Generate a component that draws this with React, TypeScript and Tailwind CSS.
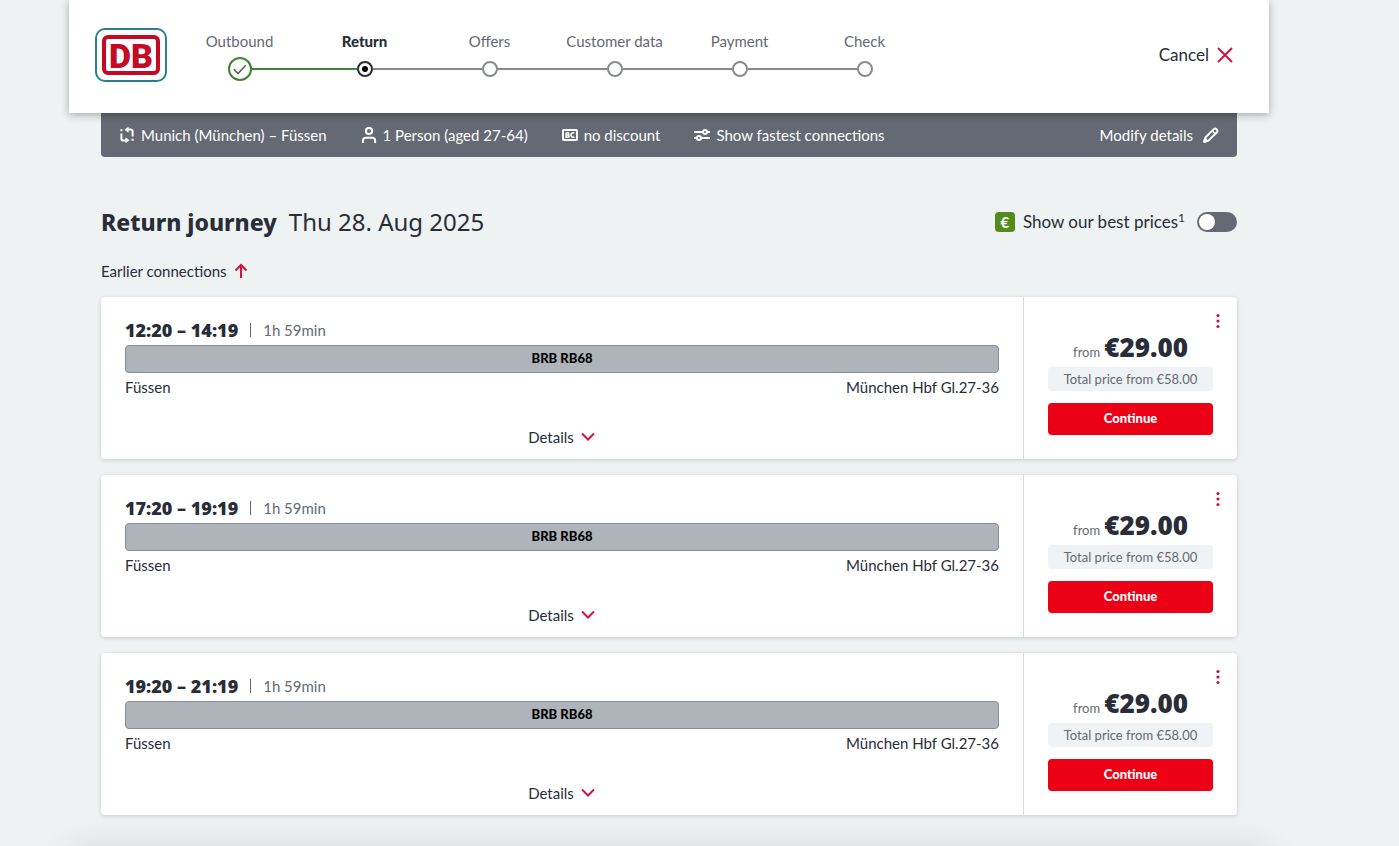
import React, { useState } from 'react';

interface Connection {
  departure: string;
  arrival: string;
  duration: string;
  train: string;
  from: string;
  to: string;
  price: string;
  total: string;
}

const steps = ['Outbound', 'Return', 'Offers', 'Customer data', 'Payment', 'Check'];
const currentStep = 1;

const connections: Connection[] = [
  { departure: '12:20', arrival: '14:19', duration: '1h 59min', train: 'BRB RB68', from: 'Füssen', to: 'München Hbf Gl.27-36', price: '€29.00', total: '€58.00' },
  { departure: '17:20', arrival: '19:19', duration: '1h 59min', train: 'BRB RB68', from: 'Füssen', to: 'München Hbf Gl.27-36', price: '€29.00', total: '€58.00' },
  { departure: '19:20', arrival: '21:19', duration: '1h 59min', train: 'BRB RB68', from: 'Füssen', to: 'München Hbf Gl.27-36', price: '€29.00', total: '€58.00' },
];

function RouteIcon() {
  return (
    <svg className="w-4 h-4" viewBox="0 0 16 16" fill="none" stroke="currentColor" strokeWidth="2">
      <path d="M7 13.500H4.200a1.800 1.800 0 0 1-1.800-1.800V6.500M9 2.500h2.800a1.800 1.800 0 0 1 1.800 1.800V9.500" />
      <path d="M6.500 10.200v6l4-3zM9.500-.3v6l-4-3z" fill="currentColor" stroke="none" />
      <path d="M1.400 3.300h2M12.600 12.800h2" />
    </svg>
  );
}

function PersonIcon() {
  return (
    <svg className="w-4 h-4" viewBox="0 0 16 16" fill="none" stroke="currentColor" strokeWidth="2">
      <circle cx="8" cy="4" r="3.100" />
      <path d="M1.900 16v-2.200a3 3 0 0 1 3-3h6.200a3 3 0 0 1 3 3V16" />
    </svg>
  );
}

function CardIcon() {
  return (
    <svg className="w-4 h-4" viewBox="0 0 16 16" fill="none" stroke="currentColor">
      <rect x="1" y="3" width="14" height="10" rx="0.800" strokeWidth="2" />
      <path d="M4.200 5.700v4.600h1.700a1.100 1.100 0 0 0 0-2.300H4.500M5.700 8a1.100 1.100 0 0 0 0-2.300H4.200M12.400 6.200a2.200 2.200 0 1 0 0 3.600" strokeWidth="1.600" />
    </svg>
  );
}

function SlidersIcon() {
  return (
    <svg className="w-4 h-4" viewBox="0 0 16 16" fill="none" stroke="currentColor" strokeWidth="2">
      <path d="M0 5h9M13 5h3M0 11h3M7 11h9" />
      <circle cx="11" cy="5" r="2" />
      <circle cx="5" cy="11" r="2" />
    </svg>
  );
}

function PencilIcon() {
  return (
    <svg className="w-4 h-4" viewBox="0 0 16 16" fill="none" stroke="currentColor" strokeWidth="2" strokeLinejoin="round">
      <path d="M1.200 14.800l1.200-4.300 8.400-8.400a1.800 1.800 0 0 1 2.500 0l.6.6a1.800 1.800 0 0 1 0 2.500l-8.400 8.400z" />
      <path d="M9.200 3.800l3 3" strokeWidth="1.400" />
      <path d="M1.200 14.800l.8-3 2.200 2.200z" fill="currentColor" />
    </svg>
  );
}

function Logo() {
  return (
    <a href="#" aria-label="DB" className="w-[72px] h-[54px] shrink-0 rounded-[10px] border-2 border-[#2a7f94] flex items-center justify-center">
      <span className="w-[58px] h-10 pt-0.5 rounded-md border-4 border-[#c50a25] flex items-center justify-center font-['Roboto',sans-serif] font-black text-[34px] leading-none text-[#c50a25]">
        DB
      </span>
    </a>
  );
}

function StepMarker({ index }: { index: number }) {
  if (index < currentStep) {
    return (
      <svg className="w-6 h-6 shrink-0" viewBox="0 0 24 24" fill="none" stroke="#408335" strokeWidth="2">
        <circle cx="12" cy="12" r="11" />
        <path d="M5.800 12.200l4.200 4.300 7.800-8.300" stroke="#4d6b48" strokeWidth="1.600" />
      </svg>
    );
  }
  if (index === currentStep) {
    return (
      <span className="w-4 h-4 shrink-0 rounded-full border-2 border-[#282d37] bg-white flex items-center justify-center">
        <span className="w-1.5 h-1.5 rounded-full bg-black" />
      </span>
    );
  }
  return <span className="w-4 h-4 shrink-0 rounded-full border-2 border-[#878c8b] bg-white" />;
}

function Header() {
  const lineColor = (index: number) => {
    if (index < 0 || index >= steps.length - 1) return 'bg-transparent';
    return index < currentStep ? 'bg-[#408335]' : 'bg-[#878787]';
  };

  return (
    <header className="relative z-10 h-[113px] bg-white shadow-[0_2px_8px_rgba(0,0,0,0.3)] flex items-center pl-[26px] pr-8 pb-[3px]">
      <Logo />
      <ol className="flex ml-2.5 pt-0.5">
        {steps.map((step, index) => (
          <li key={step} className="w-[125px] flex flex-col items-center gap-1.5">
            <span className={`text-[15px] leading-5 ${index === currentStep ? 'font-black text-[#282d37]' : 'text-[#646973]'}`}>
              {step}
            </span>
            <span className="w-full h-6 flex items-center">
              <span className={`flex-1 h-0.5 ${lineColor(index - 1)}`} />
              <StepMarker index={index} />
              <span className={`flex-1 h-0.5 ${lineColor(index)}`} />
            </span>
          </li>
        ))}
      </ol>
      <button className="ml-auto flex items-center gap-1 text-[17px] leading-6">
        Cancel
        <svg className="w-6 h-6" viewBox="0 0 24 24" fill="none" stroke="#d6123a" strokeWidth="2">
          <path d="M5 5l14 14M19 5L5 19" />
        </svg>
      </button>
    </header>
  );
}

function SearchSummary() {
  const items = [
    { icon: <RouteIcon />, label: 'Munich (München) – Füssen' },
    { icon: <PersonIcon />, label: '1 Person (aged 27-64)' },
    { icon: <CardIcon />, label: 'no discount' },
    { icon: <SlidersIcon />, label: 'Show fastest connections' },
  ];

  return (
    <div className="h-11 bg-[#646973] text-white rounded-b flex items-center px-[18px] text-[15px] leading-5">
      <ul className="flex gap-[34px]">
        {items.map((item) => (
          <li key={item.label} className="flex items-center gap-1.5">
            {item.icon}
            {item.label}
          </li>
        ))}
      </ul>
      <button className="ml-auto flex items-center gap-2.5">
        Modify details
        <PencilIcon />
      </button>
    </div>
  );
}

function ConnectionCard({ connection }: { connection: Connection }) {
  return (
    <li className="bg-white rounded shadow-[0_1px_4px_rgba(0,0,0,0.16)] flex">
      <div className="flex-1 px-6 pt-[23px] pb-3 flex flex-col">
        <div className="h-5 flex items-center leading-5">
          <span className="font-['Noto_Sans',sans-serif] text-[18px] font-black">
            {connection.departure} – {connection.arrival}
          </span>
          <span className="w-px h-3.5 bg-[#646973] mx-3" />
          <span className="text-[15px] text-[#646973]">{connection.duration}</span>
        </div>
        <div className="mt-[5px] h-7 rounded border border-[#878c96] bg-[#afb4bb] flex items-center justify-center text-[13px] font-black text-black">
          {connection.train}
        </div>
        <div className="mt-1 flex justify-between text-[15px] leading-5">
          <span>{connection.from}</span>
          <span>{connection.to}</span>
        </div>
        <button className="mt-auto self-center flex items-center gap-1.5 text-[15px] leading-5">
          Details
          <svg className="w-4 h-4" viewBox="0 0 16 16" fill="none" stroke="#d6123a" strokeWidth="2">
            <path d="M2 4.500l6 6 6-6" />
          </svg>
        </button>
      </div>
      <div className="relative w-[214px] border-l border-[#d7dce1] px-6 pt-[34px] pb-6 flex flex-col">
        <button aria-label="More options" className="absolute top-4 right-[11px] w-4 h-4">
          <svg className="w-4 h-4" viewBox="0 0 16 16" fill="#c8143c">
            <circle cx="8" cy="2.500" r="1.600" />
            <circle cx="8" cy="8" r="1.600" />
            <circle cx="8" cy="13.500" r="1.600" />
          </svg>
        </button>
        <div className="h-8 flex items-baseline justify-center gap-1 leading-8">
          <span className="text-[13px] text-[#646973]">from</span>
          <span className="font-['Noto_Sans',sans-serif] text-[26px] font-black">{connection.price}</span>
        </div>
        <div className="mt-1 h-6 rounded bg-[#f0f3f5] text-center text-[13px] leading-6 text-[#646973]">
          Total price from {connection.total}
        </div>
        <button className="mt-3 h-8 rounded bg-[#ec0016] text-[13px] font-black text-white">Continue</button>
      </div>
    </li>
  );
}

export default function App() {
  const [bestPrices, setBestPrices] = useState(false);

  return (
    <div className="relative min-h-screen overflow-hidden bg-[#eef2f3] pr-[61px] font-['Lato',sans-serif] text-[#282d37]">
      <div className="max-w-[1200px] mx-auto">
        <Header />
        <main className="px-8 pb-[31px]">
          <SearchSummary />

          <div className="mt-[47px] flex items-center justify-between">
            <h1 className="font-['Noto_Sans',sans-serif] text-[24px] leading-9 flex items-baseline gap-3">
              <span className="text-[23px] font-extrabold">Return journey</span>
              <span>Thu 28. Aug 2025</span>
            </h1>
            <label className="flex items-center text-[17px] leading-6 cursor-pointer">
              <span className="w-5 h-5 mr-2 rounded bg-[#508b1b] text-white text-[15px] leading-5 font-bold text-center">€</span>
              <span>
                Show our best prices<sup className="text-[12px]">1</sup>
              </span>
              <input
                type="checkbox"
                role="switch"
                checked={bestPrices}
                onChange={(e) => setBestPrices(e.target.checked)}
                className="ml-3 w-10 h-5 appearance-none rounded-full bg-[#646973] p-0.5 before:block before:w-4 before:h-4 before:rounded-full before:bg-white checked:bg-[#508b1b] checked:before:translate-x-5"
              />
            </label>
          </div>

          <button className="mt-[21px] flex items-center gap-1.5 text-[15px] leading-5">
            Earlier connections
            <svg className="w-4 h-4" viewBox="0 0 16 16" fill="none" stroke="#d6123a" strokeWidth="2">
              <path d="M8 15V2M2.500 7.500L8 2l5.500 5.500" />
            </svg>
          </button>

          <ul className="mt-4 flex flex-col gap-4">
            {connections.map((connection) => (
              <ConnectionCard key={connection.departure} connection={connection} />
            ))}
          </ul>
        </main>
      </div>
      {/* Shadow of the footer below the fold */}
      <div className="absolute top-full left-[69px] right-[130px] h-8 shadow-[0_0_32px_rgba(0,0,0,0.1)]" />
    </div>
  );
}
